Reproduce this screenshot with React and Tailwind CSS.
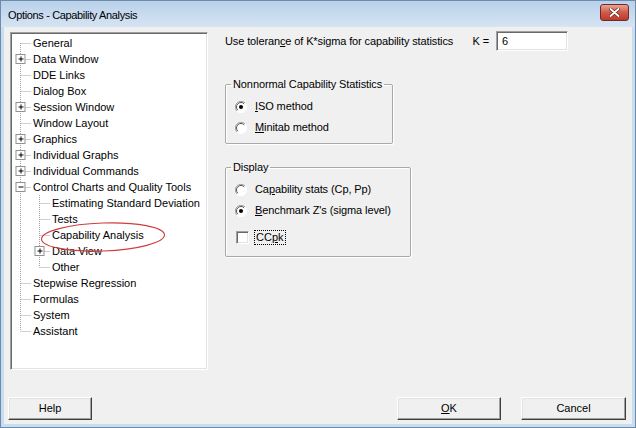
import React from "react";

const FONT = { fontFamily: '"Liberation Sans", Arial, sans-serif' };

const tree = [
  { l: 0, t: "General" },
  { l: 0, t: "Data Window", b: "+" },
  { l: 0, t: "DDE Links" },
  { l: 0, t: "Dialog Box" },
  { l: 0, t: "Session Window", b: "+" },
  { l: 0, t: "Window Layout" },
  { l: 0, t: "Graphics", b: "+" },
  { l: 0, t: "Individual Graphs", b: "+" },
  { l: 0, t: "Individual Commands", b: "+" },
  { l: 0, t: "Control Charts and Quality Tools", b: "-" },
  { l: 1, t: "Estimating Standard Deviation" },
  { l: 1, t: "Tests" },
  { l: 1, t: "Capability Analysis" },
  { l: 1, t: "Data View", b: "+" },
  { l: 1, t: "Other", last1: true },
  { l: 0, t: "Stepwise Regression" },
  { l: 0, t: "Formulas" },
  { l: 0, t: "System" },
  { l: 0, t: "Assistant", last: true },
];

function Box({ cx, sign }) {
  const x = cx - 4.5;
  return (
    <g>
      <rect x={x} y={3.5} width={9} height={9} fill="#fff" stroke="#919191" />
      <line x1={cx - 2} y1={8} x2={cx + 3} y2={8} stroke="#000" strokeWidth="1" />
      {sign === "+" && <line x1={cx + 0.5} y1={5.5} x2={cx + 0.5} y2={10.5} stroke="#000" strokeWidth="1" />}
    </g>
  );
}

function TreeRow({ item, idx }) {
  const dot = { stroke: "#a0a0a0", strokeDasharray: "1 1", strokeWidth: 1 };
  const w = item.l === 0 ? 21 : 40;
  const v0 = 9.5;
  const v1 = 28.5;
  return (
    <div className="flex items-center h-[16px]">
      <svg width={w} height={16} className="shrink-0">
        {item.l === 0 ? (
          <>
            {idx > 0 && <line x1={v0} y1={0} x2={v0} y2={8} style={dot} />}
            {!item.last && <line x1={v0} y1={8} x2={v0} y2={16} style={dot} />}
            <line x1={v0} y1={8.5} x2={20} y2={8.5} style={dot} />
            {item.b && <Box cx={v0} sign={item.b} />}
          </>
        ) : (
          <>
            <line x1={v0} y1={0} x2={v0} y2={16} style={dot} />
            <line x1={v1} y1={0} x2={v1} y2={8} style={dot} />
            {!item.last1 && <line x1={v1} y1={8} x2={v1} y2={16} style={dot} />}
            <line x1={v1} y1={8.5} x2={39} y2={8.5} style={dot} />
            {item.b && <Box cx={v1} sign={item.b} />}
          </>
        )}
      </svg>
      <span className="ml-[1px] text-[11px] leading-[16px] text-black whitespace-nowrap">{item.t}</span>
    </div>
  );
}

function Radio({ checked }) {
  return (
    <svg width="12" height="12" viewBox="0 0 12 12" className="shrink-0">
      <circle cx="6" cy="6" r="5.5" fill="#fff" />
      <path d="M10 2 A5.5 5.5 0 0 0 2 10" fill="none" stroke="#a0a0a0" />
      <path d="M9.2 2.8 A4.5 4.5 0 0 0 2.8 9.2" fill="none" stroke="#555" />
      <path d="M2 10 A5.5 5.5 0 0 0 10 2" fill="none" stroke="#fff" />
      {checked && <circle cx="6" cy="6" r="2" fill="#000" />}
    </svg>
  );
}

function RadioRow({ checked, children }) {
  return (
    <div className="flex items-center h-[21px] pl-[9px]">
      <Radio checked={checked} />
      <span className="ml-[8px] text-[11px] tracking-[-0.1px] text-black whitespace-nowrap">{children}</span>
    </div>
  );
}

function Group({ title, className, children }) {
  return (
    <fieldset className={"border border-[#a9a9a9] rounded-[2px] shadow-[inset_1px_1px_0_#fff,1px_1px_0_#fff] " + className}>
      <legend className="ml-[5px] px-[2px] text-[11px] tracking-[-0.1px] leading-[14px] text-black">{title}</legend>
      {children}
    </fieldset>
  );
}

function Button({ w, children }) {
  return (
    <button
      className={
        "h-[23px] bg-[#f0f0f0] text-[11px] text-black border border-t-white border-l-white border-b-[#404040] border-r-[#404040] shadow-[inset_-1px_-1px_0_#a0a0a0,inset_1px_1px_0_#e3e3e3] " +
        w
      }
      style={FONT}
    >
      {children}
    </button>
  );
}

export default function App() {
  return (
    <div
      className="w-[636px] h-[428px] flex flex-col bg-[#cadcf0] border border-[#6d8bab] overflow-hidden"
      style={FONT}
    >
      {/* title bar */}
      <div className="h-[26px] flex items-start bg-gradient-to-b from-[#b9d1ea] to-[#d6e4f3]">
        <div className="pl-[7px] pt-[6px] text-[11px] tracking-[-0.35px] text-black flex-1">
          Options - Capability Analysis
        </div>
        <div className="mt-[3px] mr-[6px] w-[29px] h-[17px] rounded-[3px] border border-[#6e2a26] bg-gradient-to-b from-[#e8a493] via-[#cf5a49] to-[#c0392b] flex items-center justify-center">
          <svg width="11" height="9" viewBox="0 0 11 9">
            <path d="M1.5 1 L9.5 8 M9.5 1 L1.5 8" stroke="#5a1a14" strokeWidth="3.2" strokeLinecap="round" />
            <path d="M1.5 1 L9.5 8 M9.5 1 L1.5 8" stroke="#fff" strokeWidth="1.9" strokeLinecap="round" />
          </svg>
        </div>
      </div>

      {/* body */}
      <div className="flex-1 mx-[3px] mb-[3px] bg-[#f0f0f0] flex flex-col">
        <div className="flex items-start pt-[5px] pl-[6px]">
          {/* tree */}
          <div className="relative w-[198px] h-[338px] bg-white border border-t-[#a0a0a0] border-l-[#a0a0a0] border-b-white border-r-white shadow-[inset_1px_1px_0_#696969,inset_-1px_-1px_0_#e3e3e3] pt-[2px]">
            {tree.map((it, i) => (
              <TreeRow key={i} item={it} idx={i} />
            ))}
            <svg
              className="absolute left-[29px] top-[188px]"
              width="126"
              height="32"
              viewBox="0 0 126 32"
            >
              <ellipse
                cx="63"
                cy="16"
                rx="61.5"
                ry="14"
                fill="none"
                stroke="#d23b3b"
                strokeWidth="1.1"
                transform="rotate(-2 63 16)"
              />
            </svg>
          </div>

          {/* right pane */}
          <div className="ml-[17px] flex flex-col">
            <div className="flex items-center h-[20px] -mt-[1px]">
              <div className="w-[271px] flex items-center text-[11px] tracking-[-0.12px] text-black whitespace-nowrap">
                <span>
                  Use toleran<span className="underline">c</span>e of K*sigma for capability statistics
                </span>
                <span className="ml-auto mr-[7px]">K =</span>
              </div>
              <div className="w-[72px] h-[20px] bg-white border border-t-[#a0a0a0] border-l-[#a0a0a0] border-b-white border-r-white shadow-[inset_1px_1px_0_#696969,inset_-1px_-1px_0_#e3e3e3] flex items-center pl-[5px] text-[11px] text-black">
                6
              </div>
            </div>

            <Group title="Nonnormal Capability Statistics" className="mt-[26px] w-[168px] h-[67px] pt-[5px]">
              <RadioRow checked>
                <span className="underline">I</span>SO method
              </RadioRow>
              <RadioRow>
                <span className="underline">M</span>initab method
              </RadioRow>
            </Group>

            <Group title="Display" className="mt-[16px] w-[186px] h-[97px] pt-[5px]">
              <RadioRow>
                Ca<span className="underline">p</span>ability stats (Cp, Pp)
              </RadioRow>
              <RadioRow checked>
                <span className="underline">B</span>enchmark Z's (sigma level)
              </RadioRow>
              <div className="flex items-center h-[21px] pl-[10px] mt-[6px]">
                <div className="w-[13px] h-[13px] bg-white border border-t-[#a0a0a0] border-l-[#a0a0a0] border-b-white border-r-white shadow-[inset_1px_1px_0_#696969,inset_-1px_-1px_0_#e3e3e3]" />
                <span className="ml-[5px] px-[1px] border border-dotted border-black text-[11px] leading-[13px] text-black">
                  CC<span className="underline">p</span>k
                </span>
              </div>
            </Group>
          </div>
        </div>

        <div className="flex items-start mt-[27px] pl-[4px] pr-[6px]">
          <Button w="w-[84px]">Help</Button>
          <div className="flex-1" />
          <Button w="w-[104px]">
            <span className="underline">O</span>K
          </Button>
          <div className="w-[20px]" />
          <Button w="w-[105px]">Cancel</Button>
        </div>
      </div>
    </div>
  );
}
